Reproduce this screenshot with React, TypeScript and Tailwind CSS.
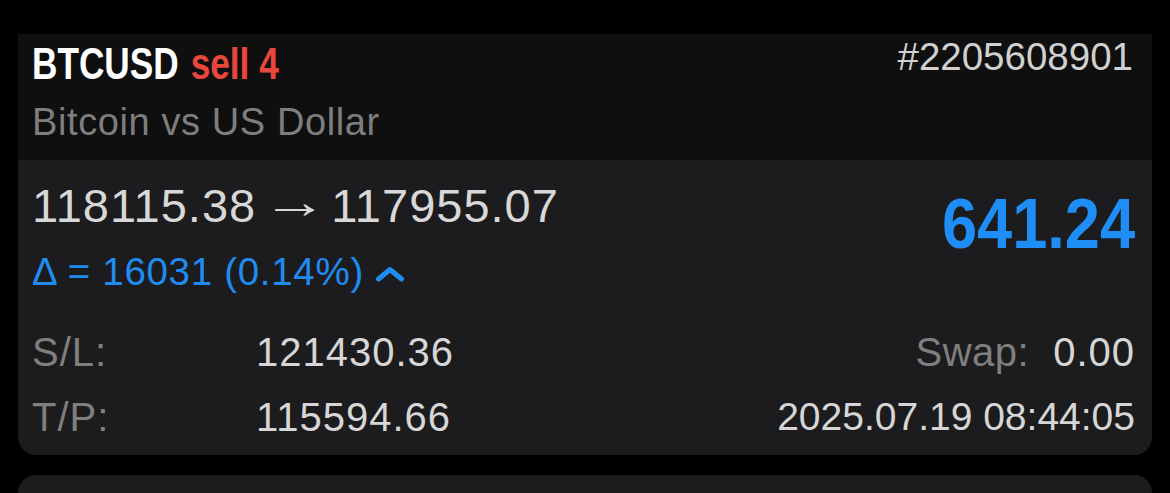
import React from "react";

export default function App() {
  return (
    <div className="min-h-[493px] w-[1170px] overflow-hidden bg-black pt-[34px] font-['Liberation_Sans',Arial,sans-serif]">
      <div className="mx-[18px]">
        {/* Header */}
        <div className="flex h-[126px] justify-between bg-[#0f0f0f] pl-[14px] pr-[19px]">
          <div className="flex flex-col">
            <div className="mt-[8px] h-[44px] whitespace-nowrap">
              <div className="inline-block origin-left scale-x-[0.8] text-[44px] font-bold leading-[44px]">
                <span className="text-white">BTCUSD</span>
                <span className="ml-[15px] text-[#e9473d]">sell 4</span>
              </div>
            </div>
            <div className="mt-[17px] text-[38px] leading-[38px] tracking-[0.6px] text-[#7e7e7e]">Bitcoin vs US Dollar</div>
          </div>
          <div className="mt-[3px] text-[38.5px] leading-[39px] text-[#d0d0d0]">#2205608901</div>
        </div>

        {/* Body */}
        <div className="rounded-b-[18px] bg-[#1c1c1e] pb-[18px] pl-[14px] pr-[17px] pt-[22px]">
          <div className="flex justify-between">
            <div className="flex flex-col">
              <div className="flex h-[47px] items-center whitespace-nowrap text-[47px] leading-[47px] tracking-[1px] text-[#d8d8d8]">
                <span>118115.38</span>
                <span className="ml-[15px] mr-[13px] inline-block -translate-y-[4px] scale-x-[1.4] tracking-normal">→</span>
                <span>117955.07</span>
              </div>
              <div className="mt-[24px] flex h-[38px] items-center whitespace-nowrap text-[38.5px] leading-[38px] tracking-[0.7px] text-[#1f8cf2]">
                <span>Δ = 16031 (0.14%)</span>
                <svg className="ml-[11px] mt-[4px]" width="30" height="16" viewBox="0 0 30 16">
                  <polyline points="3.5,13 15,3.5 26.5,13" fill="none" stroke="#1f8cf2" strokeWidth="5" strokeLinecap="round" strokeLinejoin="round" />
                </svg>
              </div>
            </div>
            <div className="mt-[6px] h-[71px] whitespace-nowrap">
              <div className="inline-block origin-right scale-x-[0.89] text-[71px] font-bold leading-[71px] text-[#1e8df5]">641.24</div>
            </div>
          </div>

          <div className="mt-[41px] flex flex-col gap-[25px] text-[40px] leading-[40px]">
            <div className="flex h-[40px] whitespace-nowrap">
              <span className="w-[224px] tracking-[1px] text-[#7f7f7f]">S/L:</span>
              <span className="tracking-[1px] text-[#d6d6d6]">121430.36</span>
              <span className="ml-auto tracking-[0.5px] text-[#7f7f7f]">Swap:</span>
              <span className="ml-[24px] tracking-[1px] text-[#d6d6d6]">0.00</span>
            </div>
            <div className="flex h-[40px] whitespace-nowrap">
              <span className="w-[224px] tracking-[1px] text-[#7f7f7f]">T/P:</span>
              <span className="tracking-[1px] text-[#d6d6d6]">115594.66</span>
              <span className="ml-auto text-[39px] text-[#d6d6d6]">2025.07.19 08:44:05</span>
            </div>
          </div>
        </div>

        {/* Next card */}
        <div className="mt-[20px] h-[40px] rounded-t-[18px] bg-[#1c1c1e]" />
      </div>
    </div>
  );
}
